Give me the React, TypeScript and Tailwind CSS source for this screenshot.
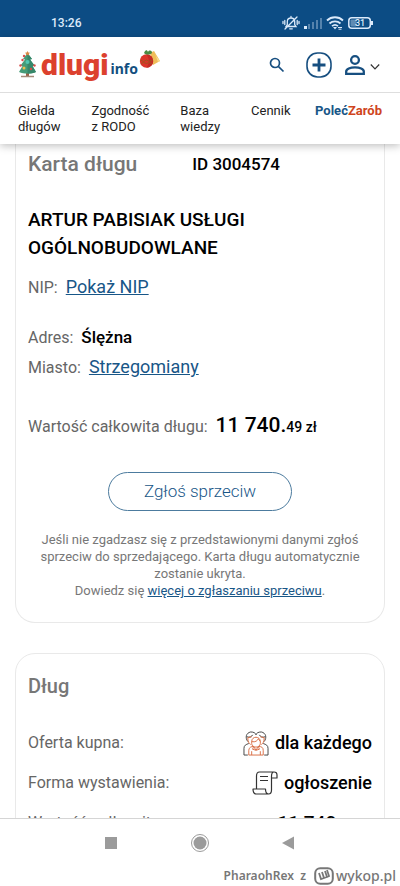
import type { ReactNode } from "react";

function StatusBar() {
  return (
    <div className="flex h-[37px] shrink-0 items-center justify-between bg-[#0c4c84] pt-2 pr-[26px] pl-[51px] text-[#dceafa]">
      <span className="text-xs font-medium">13:26</span>
      <div className="flex items-center gap-1">
        <svg width="18" height="16" viewBox="0 0 18 16" fill="none" stroke="currentColor" strokeWidth="1.3" strokeLinecap="round">
          <path d="M4 11.5h10L12.7 9.500V6.500A3.700 3.700 0 0 0 9 3a3.700 3.700 0 0 0-3.700 3.500v3zM9 3V1.500M7.700 13.800h2.600M3 14 15 2M2.800 5.500v4M1 6.500v2M15.200 5.500v4M17 6.500v2" />
        </svg>
        <svg width="18" height="12" viewBox="0 0 18 12" fill="currentColor">
          <rect x="0" y="9" width="3" height="3" />
          <g opacity=".35">
            <rect x="4" y="7" width="2" height="5" />
            <rect x="8" y="5" width="2" height="7" />
            <rect x="12" y="3" width="2" height="9" />
            <rect x="16" y="1" width="2" height="11" />
          </g>
        </svg>
        <svg width="18" height="14" viewBox="0 0 18 14" fill="none" stroke="currentColor" strokeWidth="1.8">
          <path d="M1 4.500a11.500 11.500 0 0 1 16 0M3.500 7.500a8 8 0 0 1 11 0M6 10.200a4.500 4.500 0 0 1 6 0" />
          <path d="m7 11 2 2.500 2-2.500z" fill="currentColor" stroke="none" />
          <path d="M12 11.500h4M12.500 13.200h3" strokeWidth="1" />
        </svg>
        <svg width="26" height="12" viewBox="0 0 26 12" fill="none">
          <rect x=".8" y=".8" width="21.500" height="10.400" rx="3" stroke="currentColor" strokeWidth="1.500" />
          <rect x="2.500" y="2.500" width="6" height="7" rx="1" fill="currentColor" opacity=".4" />
          <path d="M24 4v4" stroke="currentColor" strokeWidth="2" />
          <text x="12" y="9" fontSize="9" fontWeight="500" textAnchor="middle" fill="currentColor">31</text>
        </svg>
      </div>
    </div>
  );
}

function Logo() {
  return (
    <a href="#start" aria-label="dlugi info" className="flex items-center">
      <svg width="19" height="28" viewBox="0 0 19 28">
        <path d="M8 20h3v5H8z" fill="#9a6248" />
        <path d="M3 25.500h13" stroke="#a58a79" strokeWidth="1.500" />
        <path d="m9.500 2 4.500 6-2 .5 4.500 6-2 .5 3.500 6c-5 2-12 2-17 0l3.500-6-2-.5 4.500-6-2-.5z" fill="#459b78" />
        <path d="m9.500 2 4.500 6-2 .5 4.500 6-2 .5 3.500 6c-2.500 1-5 1.500-8.500 1.500z" fill="#36876a" />
        <path d="m9.500 0 .8 1.500 1.700.2-1.200 1.200.3 1.700-1.600-.8-1.600.8.300-1.700L7 1.700l1.700-.2z" fill="#d98a47" />
        <g fill="#d74f4b"><circle cx="6" cy="5" r="1.200" /><circle cx="4.500" cy="9" r="1.200" /><circle cx="2.500" cy="14.500" r="1.200" /><circle cx="16.500" cy="14.500" r="1.200" /><circle cx="13" cy="18" r="1.200" /></g>
        <circle cx="9.500" cy="11" r="2" fill="#52c7b2" />
        <circle cx="6" cy="17" r="1.500" fill="#edc04d" />
      </svg>
      <span className="ml-1 text-[30px] leading-10 font-black text-[#dc412e]">dlugi</span>
      <span className="mt-2 ml-0.5 font-['Noto_Sans'] text-sm leading-5 font-bold text-[#124f7f]">info</span>
      <svg className="-mt-3 ml-px" width="22" height="20" viewBox="0 0 22 20">
        <path d="m11 4 4-2 6 10-7 4z" fill="#efbd59" />
        <path d="m15 2 2 5 4 5-2 1z" fill="#f7dc91" />
        <circle cx="7.500" cy="12" r="6.700" fill="#db352b" />
        <path d="M7.500 5.300a6.700 6.700 0 0 1 0 13.400c3-4 3-9 0-13.400" fill="#c52b26" />
        <path d="m1.500 11 3 1.500 3-1.500 3 1.500 3-1.500M2 14.500l2.500-1 3 1 3-1 2.500 1" fill="none" stroke="#a3531f" strokeWidth="1" />
        <path d="M5 4c1-3 3-4 4-1 1-2 4-2 4 1-2 2-6 2-8 0" fill="#4a8a42" />
      </svg>
    </a>
  );
}

function Header() {
  return (
    <header className="relative z-10 shrink-0 bg-white shadow-[0_2px_8px_rgba(0,0,0,0.25)]">
      <div className="flex h-14 items-center justify-between border-b border-[#dedede] pr-5 pl-[18px] text-[#174f80]">
        <Logo />
        <div className="flex items-center">
          <button aria-label="Szukaj" className="mr-5">
            <svg width="18" height="18" viewBox="0 0 18 18" fill="none" stroke="currentColor" strokeWidth="1.700">
              <circle cx="7" cy="7" r="4.500" /><path d="m10.300 10.300 5.200 5.200" />
            </svg>
          </button>
          <button aria-label="Dodaj" className="mr-3">
            <svg width="26" height="26" viewBox="0 0 26 26" fill="none" stroke="currentColor">
              <rect x="1" y="1" width="24" height="24" rx="10.500" strokeWidth="1.600" />
              <path d="M13 6.500v13M6.500 13h13" strokeWidth="2.800" />
            </svg>
          </button>
          <button aria-label="Konto" className="flex items-center gap-1">
            <svg width="22" height="22" viewBox="0 0 22 22" fill="none" stroke="currentColor" strokeWidth="2.300">
              <circle cx="11" cy="6" r="3.900" />
              <path d="M2.200 19.800v-2.300c0-2.500 4-4.200 8.800-4.200s8.800 1.700 8.800 4.200v2.300z" />
            </svg>
            <svg className="mt-1" width="10" height="8" viewBox="0 0 10 8" fill="none" stroke="#333" strokeWidth="1.200"><path d="m.8 1.500 4.200 4.300 4.200-4.300" /></svg>
          </button>
        </div>
      </div>
      <nav className="flex h-[51px] items-start justify-between px-[18px] pt-[10px] text-[13px] leading-4 text-[#222]">
        <div className="flex gap-[31px]">
          <a href="#gielda">Giełda<br />długów</a>
          <a href="#rodo">Zgodność<br />z RODO</a>
          <a href="#wiedza">Baza<br />wiedzy</a>
          <a href="#cennik">Cennik</a>
        </div>
        <a href="#polec" className="font-bold text-[#185687]">Poleć<span className="text-[#cf451d]">Zarób</span></a>
      </nav>
    </header>
  );
}

function Field({ label, children }: { label: string; children: ReactNode }) {
  return (
    <div className="flex h-[30px] items-baseline gap-2 leading-[30px]">
      <dt className="text-base leading-[30px] text-[#666]">{label}</dt>
      <dd className="text-lg leading-[30px]">{children}</dd>
    </div>
  );
}

function Row({ label, icon, children }: { label: string; icon?: ReactNode; children: ReactNode }) {
  return (
    <div className="flex h-10 items-center justify-between">
      <dt className="text-base text-[#666]">{label}</dt>
      <dd className="flex items-center gap-1.5 text-lg font-medium text-black">{icon}{children}</dd>
    </div>
  );
}

function PeopleIcon() {
  return (
    <svg width="26" height="25" viewBox="0 0 27 26" fill="none" strokeWidth="1">
      <g stroke="#444">
        <path d="M1 25v-7c0-3 2-4 5-5M26 25v-7c0-3-2-4-5-5M1 25h4M22 25h4" />
        <path d="M5 11C2 7 3 2 8 1c3 0 5 1 5.500 3C14 2 16 1 19 1c5 1 6 6 3 10" />
        <path d="M4 6c3 1 5 0 6-2M23 6c-3 1-5 0-6-2" />
      </g>
      <g stroke="#d96f47">
        <path d="M5 7c0 4 1 6 3 7M22 7c0 4-1 6-3 7M5 7l4-1M22 7l-4-1" />
        <path d="M9 11c0-6 9-6 9 0v2c0 5-9 5-9 0zM9 11c4 1 6-1 7-3l2 3" />
        <path d="M6 25v-5c0-3 3-4 5-4l2.500 4 2.500-4c3 0 5 1 5 4v5zM9 25v-4M18 25v-4M11 16l-1 3 3.500 1 3.500-1-1-3" />
      </g>
    </svg>
  );
}

function ScrollIcon() {
  return (
    <svg width="26" height="24" viewBox="0 0 26 24" fill="none" stroke="#333" strokeWidth="1.200" strokeLinejoin="round">
      <path d="M22 1H7.500C5.500 1 4.500 2.500 4.500 5v12.500M22 1c-2 0-2.500 2-2.500 4.500V19c0 2.500-1 4-3 4H4c-2 0-3-2-3-5h12.500c0 3 .5 5 3 5M19.500 7H25V4c0-2-1-3-3-3M8 5.500h8M8 9.500h8" />
    </svg>
  );
}

function DebtCard() {
  return (
    <section className="rounded-b-[20px] border-x border-b border-[#e9e9e9] px-3 pb-[23px] text-black">
      <div className="flex h-[41px] items-center gap-[55px]">
        <h1 className="text-[21px] font-medium text-[#777]">Karta długu</h1>
        <span className="text-[17px] font-medium">ID 3004574</span>
      </div>
      <h2 className="mt-[21px] text-[19px] leading-7 font-medium">ARTUR PABISIAK USŁUGI OGÓLNOBUDOWLANE</h2>
      <dl className="mt-[10px]">
        <Field label="NIP:"><a href="#nip" className="text-[#185687] underline">Pokaż NIP</a></Field>
        <div className="mt-5"><Field label="Adres:"><span className="text-[17px] font-medium">Ślężna</span></Field></div>
        <Field label="Miasto:"><a href="#miasto" className="text-[#185687] underline">Strzegomiany</a></Field>
        <div className="mt-7">
          <Field label="Wartość całkowita długu:"><span className="text-[21px] font-medium">11 740.<span className="text-sm">49 zł</span></span></Field>
        </div>
      </dl>
      <button className="mx-auto mt-8 block h-[39px] w-[184px] rounded-full border border-[#4c7b9e] text-[17px] font-light text-[#185687]">Zgłoś sprzeciw</button>
      <p className="mt-5 px-2 text-center text-[13px] leading-[17px] text-[#777]">
        Jeśli nie zgadzasz się z przedstawionymi danymi zgłoś sprzeciw do sprzedającego. Karta długu automatycznie zostanie ukryta.<br />
        Dowiedz się <a href="#sprzeciw" className="text-[#185687] underline">więcej o zgłaszaniu sprzeciwu</a>.
      </p>
    </section>
  );
}

export default function App() {
  return (
    <div className="flex h-screen flex-col overflow-hidden bg-white font-[Roboto,sans-serif]">
      <StatusBar />
      <Header />
      <main className="min-h-0 flex-1 overflow-hidden px-[15px]">
        <DebtCard />
        <section className="mt-[30px] rounded-t-[20px] border border-[#e9e9e9] px-3 pt-4">
          <h2 className="text-xl leading-8 font-medium text-[#777]">Dług</h2>
          <dl className="mt-[21px]">
            <Row label="Oferta kupna:" icon={<PeopleIcon />}>dla każdego</Row>
            <Row label="Forma wystawienia:" icon={<ScrollIcon />}>ogłoszenie</Row>
            <Row label="Wartość całkowita:"><span className="text-[19px]">11 740.<span className="text-sm">49 zł</span></span></Row>
          </dl>
        </section>
      </main>
      <footer className="h-[68px] shrink-0 border-t border-[#d5d5d5] bg-white text-[#777]">
        <div className="flex h-[47px] items-center justify-center gap-[69px] text-[#9b9b9b]">
          <button aria-label="Ostatnie"><svg width="20" height="20" viewBox="0 0 20 20" fill="currentColor"><rect x="4" y="4" width="12" height="12" /></svg></button>
          <button aria-label="Ekran główny"><svg width="20" height="20" viewBox="0 0 20 20" fill="currentColor"><circle cx="10" cy="10" r="6.500" /><circle cx="10" cy="10" r="8.500" fill="none" stroke="currentColor" /></svg></button>
          <button aria-label="Wstecz"><svg width="20" height="20" viewBox="0 0 20 20" fill="currentColor"><path d="M3 10 15 3.500v13z" /></svg></button>
        </div>
        <div className="flex h-5 items-center justify-end pr-1">
          <span className="mr-2 font-['Noto_Sans'] text-xs font-semibold">PharaohRex&nbsp; z</span>
          <svg width="20" height="18" viewBox="0 0 20 18" fill="none" stroke="currentColor">
            <rect x="1.200" y="1.200" width="17.600" height="15.600" rx="5" strokeWidth="2" />
            <path d="m5 6 2 6 3-1-2-6m2 6 3-1-2-6m2 6 2-1-2-6" strokeWidth="1.800" />
          </svg>
          <span className="ml-0.5 font-['Noto_Sans'] text-sm leading-5 font-medium">wykop.pl</span>
        </div>
      </footer>
    </div>
  );
}
